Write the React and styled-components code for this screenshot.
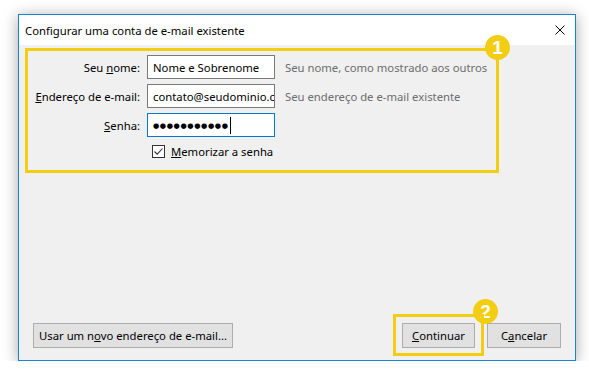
import React from "react";
import styled, { createGlobalStyle } from "styled-components";

const GlobalStyle = createGlobalStyle`
  body {
    margin: 0;
    background: #ffffff;
    font-family: "Noto Sans", "Open Sans", sans-serif;
    font-size: 11.3px;
    color: #000;
  }
`;

const YELLOW = "#f3cd13";

const Page = styled.div`
  padding: 14px 0 0 18px;
`;

const Window = styled.div`
  box-sizing: border-box;
  width: 558px;
  height: 347px;
  border: 1px solid #1883d7;
  background: #f0f0f0;
  box-shadow: 0 2px 14px rgba(0, 0, 0, 0.35);
  display: flex;
  flex-direction: column;
`;

const TitleBar = styled.div`
  height: 30px;
  background: #fff;
  display: flex;
  align-items: center;
  justify-content: space-between;
  padding: 0 10px 0 6px;
`;

const Title = styled.span`
  color: #000;
`;

const Close = styled.svg`
  width: 10px;
  height: 10px;
`;

const Body = styled.div`
  flex: 1;
  display: flex;
  flex-direction: column;
  justify-content: space-between;
  padding: 3px 14px 12px 6px;
`;

const Highlight = styled.div`
  position: relative;
  box-sizing: border-box;
  width: 474px;
  height: 125px;
  border: 3px solid ${YELLOW};
  padding-top: 4px;
`;

const Badge = styled.span`
  position: absolute;
  width: 25px;
  height: 25px;
  border-radius: 50%;
  background: ${YELLOW};
  color: #fff;
  font-family: "Liberation Sans", Arial, sans-serif;
  font-weight: bold;
  font-size: 19px;
  display: flex;
  align-items: center;
  justify-content: center;
  top: ${(p) => p.$top}px;
  right: ${(p) => p.$right}px;
`;

const Form = styled.div`
  display: grid;
  grid-template-columns: 112px 128px 1fr;
  grid-template-rows: repeat(3, 24px) 19px;
  column-gap: 7px;
  row-gap: 5px;
  align-items: center;
`;

const Label = styled.label`
  text-align: right;
  white-space: nowrap;
`;

const Field = styled.input`
  box-sizing: border-box;
  width: 128px;
  height: 24px;
  border: 1px solid #7a7a7a;
  background: #fff;
  font-family: inherit;
  font-size: 11.3px;
  color: #000;
  padding: 0 0 0 5px;
  outline: none;
`;

const PasswordBox = styled.div`
  box-sizing: border-box;
  width: 128px;
  height: 24px;
  border: 1px solid #0078d7;
  background: #fff;
  display: flex;
  align-items: center;
  padding-left: 5px;
`;

const Dots = styled.span`
  font-family: "DejaVu Sans", sans-serif;
  font-size: 7.2px;
  letter-spacing: 0.6px;
  color: #000;
`;

const Caret = styled.span`
  width: 1px;
  height: 17px;
  background: #000;
  margin-left: 1px;
`;

const Hint = styled.span`
  color: #6d6d6d;
  padding-left: 3px;
  white-space: nowrap;
`;

const CheckRow = styled.label`
  grid-column: 2 / 4;
  display: flex;
  align-items: center;
  gap: 6px;
  padding-left: 5px;
`;

const CheckBox = styled.span`
  box-sizing: border-box;
  width: 13px;
  height: 13px;
  border: 1px solid #333;
  background: #fff;
  display: flex;
  align-items: center;
  justify-content: center;
`;

const Footer = styled.div`
  display: flex;
  align-items: center;
  padding-left: 8px;
`;

const Button = styled.button`
  box-sizing: border-box;
  width: ${(p) => p.$w}px;
  height: 25px;
  border: 1px solid #adadad;
  background: #e1e1e1;
  font-family: inherit;
  font-size: 11.3px;
  color: #000;
  padding: 0;
  white-space: nowrap;
`;

const Actions = styled.div`
  margin-left: auto;
  display: flex;
  gap: 12px;
`;

const Marked = styled.div`
  position: relative;
  display: flex;
  &::after {
    content: "";
    position: absolute;
    top: -9px;
    left: -9px;
    right: -9px;
    bottom: -8px;
    border: 3px solid ${YELLOW};
    pointer-events: none;
  }
`;

const App = () => {
  return (
    <Page>
      <GlobalStyle />
      <Window>
        <TitleBar>
          <Title>Configurar uma conta de e-mail existente</Title>
          <Close viewBox="0 0 10 10">
            <path d="M0.5 0.5 L9.5 9.5 M9.5 0.5 L0.5 9.5" stroke="#000" strokeWidth="1" />
          </Close>
        </TitleBar>
        <Body>
          <Highlight>
            <Badge $top={-16} $right={-14}>1</Badge>
            <Form>
              <Label>
                Seu <u>n</u>ome:
              </Label>
              <Field readOnly defaultValue="Nome e Sobrenome" />
              <Hint>Seu nome, como mostrado aos outros</Hint>

              <Label>
                <u>E</u>ndereço de e-mail:
              </Label>
              <Field readOnly defaultValue="contato@seudominio.com" />
              <Hint>Seu endereço de e-mail existente</Hint>

              <Label>
                <u>S</u>enha:
              </Label>
              <PasswordBox>
                <Dots>●●●●●●●●●●●</Dots>
                <Caret />
              </PasswordBox>
              <span />

              <CheckRow>
                <CheckBox>
                  <svg width="11" height="11" viewBox="0 0 11 11">
                    <path d="M1.5 5.5 L4.2 8.2 L9.5 2.5" fill="none" stroke="#333" strokeWidth="1.1" />
                  </svg>
                </CheckBox>
                <span>
                  <u>M</u>emorizar a senha
                </span>
              </CheckRow>
            </Form>
          </Highlight>

          <Footer>
            <Button $w={200}>
              Usar um n<u>o</u>vo endereço de e-mail...
            </Button>
            <Actions>
              <Marked>
                <Badge $top={-24} $right={-23}>2</Badge>
                <Button $w={73}>
                  <u>C</u>ontinuar
                </Button>
              </Marked>
              <Button $w={74}>
                C<u>a</u>ncelar
              </Button>
            </Actions>
          </Footer>
        </Body>
      </Window>
    </Page>
  );
};

export default App;
